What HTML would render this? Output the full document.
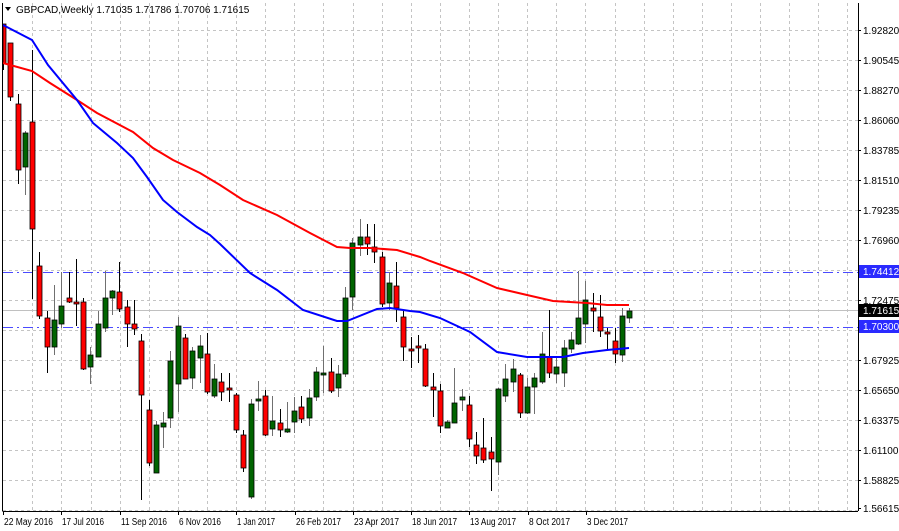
<!DOCTYPE html>
<html><head><meta charset="utf-8"><style>
html,body{margin:0;padding:0;background:#fff;}
body{width:899px;height:531px;overflow:hidden;position:relative;font-family:"Liberation Sans",sans-serif;}
svg{position:absolute;left:0;top:0;}
</style></head><body>
<svg id="s" width="899" height="531" xmlns="http://www.w3.org/2000/svg" font-family="Liberation Sans, sans-serif" font-size="10">
<rect width="899" height="531" fill="#fff"/>
<g id="grid" stroke="#c4c4c4" stroke-dasharray="3,3" stroke-width="1"></g>
<line x1="3" y1="310.5" x2="858" y2="310.5" stroke="#c0c0c0"/>
<line x1="3" y1="272.5" x2="858" y2="272.5" stroke="#4a4aff" stroke-dasharray="10,4,2,4"/>
<line x1="3" y1="327.5" x2="858" y2="327.5" stroke="#4a4aff" stroke-dasharray="10,4,2,4"/>
<g id="candles"></g>
<polyline fill="none" stroke="#ff0000" stroke-width="2" points="3,63 32,71 50,83 77,100 97,113 133,132 153,148 173,160 200,173 220,185 243,200 277,215 310,233 337,247 350,248 370,248 397,250 420,257 430,261 463,273 497,288 527,295 553,301 587,303 607,305 629,305"/>
<polyline fill="none" stroke="#0000ff" stroke-width="2" points="3,25 32,40 48,65 77,100 93,123 117,143 133,158 147,177 163,200 177,212 197,227 210,235 220,244 250,273 277,290 303,310 337,321 347,321 377,309 390,308 410,311 420,312 440,318 470,332 497,352 527,357 563,357 583,353 607,350 629,348"/>
<line x1="2.5" y1="3" x2="2.5" y2="511" stroke="#000"/>
<line x1="2.5" y1="511.5" x2="858" y2="511.5" stroke="#000"/>
<line x1="858.5" y1="3" x2="858.5" y2="511" stroke="#000"/>
<g id="axis" fill="#000"></g>
<rect x="859" y="265" width="40" height="13" fill="#2a2aff"/>
<text x="863" y="275" fill="#fff">1.74412</text>
<rect x="859" y="304" width="40" height="13" fill="#000"/>
<text x="863" y="314" fill="#fff">1.71615</text>
<rect x="859" y="320" width="40" height="13" fill="#2a2aff"/>
<text x="863" y="330" fill="#fff">1.70300</text>
<polygon points="5,7 11,7 8,11" fill="#000"/>
<text x="16" y="13" font-size="10" fill="#000">GBPCAD,Weekly  1.71035 1.71786 1.70706 1.71615</text>
</svg>
<script>
var NS="http://www.w3.org/2000/svg";
function el(p,t,a){var e=document.createElementNS(NS,t);for(var k in a)e.setAttribute(k,a[k]);p.appendChild(e);return e;}
var g=document.getElementById('grid');
for(var k=0;k<29;k++){var x=Math.round(32.3+k*29.11)+0.5;if(x<858)el(g,'line',{x1:x,y1:3,x2:x,y2:511});}
for(var y=30;y<=510;y+=30){el(g,'line',{x1:3,y1:y+0.5,x2:858,y2:y+0.5});}
var d=[
[24,70,24,63,'r'],
[44,101,43,97,'r'],[94,184,104,170,'r'],[131,195,133,167,'g'],[50,299,122,229,'r'],[252,319,266,316,'r'],
[311,373,318,347,'r'],[285,355,320,347,'g'],[272,328,306,324,'g'],[272,303,298,302,'r'],[259,326,302,304,'r'],
[298,370,302,369,'r'],[347,384,355,367,'g'],[311,357,324,357,'g'],[271,332,298,328,'g'],[290,315,291,298,'g'],
[262,312,292,309,'r'],[300,347,307,324,'r'],[300,335,324,329,'r'],[334,500,341,395,'r'],[400,466,410,463,'r'],
[421,473,425,473,'g'],[412,448,423,427,'g'],[351,428,361,418,'g'],[317,412,326,384,'g'],[334,377,338,379,'r'],
[347,389,351,378,'g'],[335,383,346,358,'g'],[333,394,354,392,'r'],[364,398,379,396,'g'],
[373,401,382,392,'r'],[373,402,388,390,'r'],[393,433,395,430,'r'],[430,472,435,468,'r'],[399,499,404,497,'g'],
[381,411,399,401,'g'],[390,436,396,435,'r'],[396,436,421,429,'g'],[409,437,423,430,'r'],[402,433,429,432,'g'],
[397,433,411,422,'g'],[396,423,407,419,'r'],[389,426,398,418,'g'],[367,401,372,397,'g'],[346,393,373,375,'g'],
[358,393,372,391,'r'],[365,397,374,388,'g'],[287,377,298,374,'g'],[238,310,243,297,'g'],[219,256,237,245,'g'],
[224,255,237,244,'r'],[224,263,247,252,'r'],[252,307,257,304,'r'],[272,310,283,303,'g'],[262,322,286,308,'r'],
[310,361,317,347,'r'],[337,368,349,351,'r'],[335,363,346,348,'r'],[344,387,349,386,'r'],[373,417,387,390,'r'],
[384,433,391,426,'r'],[420,428,422,428,'g'],[368,423,403,423,'g'],[389,411,397,400,'g'],[396,447,405,439,'r'],
[432,464,445,456,'r'],[418,463,448,460,'r'],[437,491,452,459,'r'],[388,475,389,462,'g'],[364,402,379,396,'g'],
[359,392,369,382,'g'],[373,418,375,413,'r'],[378,414,387,413,'g'],[373,414,378,387,'g'],[332,384,354,382,'g'],
[310,378,357,373,'r'],[357,383,367,374,'g'],[340,387,348,373,'g'],[332,353,340,349,'g'],[271,345,318,344,'g'],
[281,343,300,324,'g'],[293,332,308,311,'r'],[295,337,317,331,'r'],[328,350,332,334,'r'],[328,363,341,354,'r'],
[308,362,316,355,'g'],[308,323,311,318,'g']];
var c=document.getElementById('candles');
d.forEach(function(v,i){
 var x=3+i*7.28, xr=Math.round(x)+0.5;
 var red=v[4]=='r';
 el(c,'line',{x1:xr,y1:v[0],x2:xr,y2:v[1],stroke:red?'#000':'#707070'});
 var h=Math.max(1,v[3]-v[2]);
 var bx=Math.max(3,Math.round(x)-2);
 el(c,'rect',{x:bx,y:v[2],width:Math.round(x)+3-bx,height:h,fill:red?'#ff0000':'#006400',stroke:'#000','stroke-width':0.8});
});
var a=document.getElementById('axis');
var labs=[[30,'1.92820'],[60,'1.90545'],[90,'1.88270'],[120,'1.86060'],[150,'1.83785'],[180,'1.81510'],[210,'1.79235'],[240,'1.76960'],[300,'1.72475'],[360,'1.67925'],[390,'1.65650'],[420,'1.63375'],[450,'1.61100'],[480,'1.58825'],[508,'1.56615']];
labs.forEach(function(l){el(a,'line',{x1:858,y1:l[0]+0.5,x2:861,y2:l[0]+0.5,stroke:'#000'});var t=el(a,'text',{x:863,y:l[0]+4});t.textContent=l[1];});
var dates=[['22 May 2016',49],['17 Jul 2016',42],['11 Sep 2016',46],['6 Nov 2016',42],['1 Jan 2017',38],['26 Feb 2017',45],['23 Apr 2017',45],['18 Jun 2017',45],['13 Aug 2017',46],['8 Oct 2017',41],['3 Dec 2017',41]];
dates.forEach(function(s,i){var x=Math.round(3+i*58.3)+0.5;el(a,'line',{x1:x,y1:511,x2:x,y2:515,stroke:'#000'});var t=el(a,'text',{x:x+0.5,y:525,textLength:s[1],lengthAdjust:'spacingAndGlyphs'});t.textContent=s[0];});
</script>
</body></html>
